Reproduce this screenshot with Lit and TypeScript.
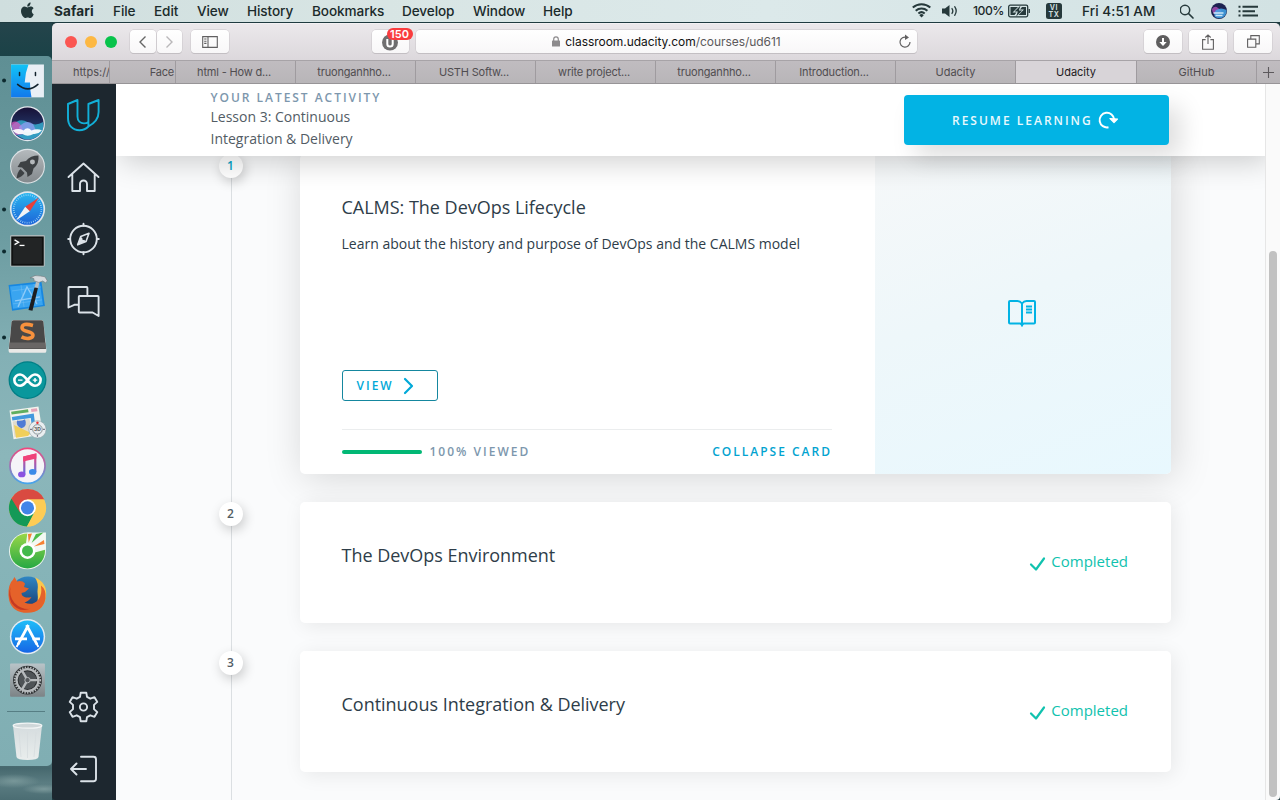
import { LitElement, html, css, svg } from "lit";
import { customElement } from "lit/decorators.js";
import { styleMap } from "lit/directives/style-map.js";

const menus = [
  { label: "Safari", width: 59 },
  { label: "File", width: 41 },
  { label: "Edit", width: 43 },
  { label: "View", width: 50 },
  { label: "History", width: 65 },
  { label: "Bookmarks", width: 90 },
  { label: "Develop", width: 71 },
  { label: "Window", width: 70 },
  { label: "Help", width: 60 },
];

@customElement("menu-bar")
class MenuBar extends LitElement {
  static styles = css`
    :host {
      display: flex;
      height: 22px;
      flex: none;
      box-sizing: content-box;
      border-bottom: 1px solid #1f3b40;
      background: linear-gradient(90deg, #cfdede 0%, #d8e5e4 30%, #dce9ea 60%, #d2e2e3 100%);
      color: #1b2a2b;
      font: 500 13.6px/22px Inter, Roboto, sans-serif;
      white-space: nowrap;
    }
    svg { display: block; flex: none; }
    .apple { width: 54px; }
    .item { flex: none; letter-spacing: -0.1px; }
    .item:nth-child(2) { font-weight: 700; letter-spacing: 0.1px; }
    .right { display: flex; margin-left: auto; width: 368px; flex: none; }
    .pct { width: 35px; font-size: 12.2px; letter-spacing: -0.5px; }
    .clock { width: 98px; letter-spacing: 0.05px; }
    .ime { width: 16px; height: 16px; margin: 3px 20px 0 16px; border-radius: 2.5px; background: #26393b; color: #cfdedf;
      font: 700 7px/7px Inter, sans-serif; text-align: center; letter-spacing: 0.6px; }
    .ime span { display: block; height: 7px; padding-top: 0.6px; }
  `;
  render() {
    return html`
      <svg class="apple" height="22" viewBox="0 0 54 22">
        <path fill="#23383a" d="M30.6 2.6c.1 1.1-.3 2.1-.9 2.8-.7.8-1.600 1.300-2.500 1.200-.1-1.100.4-2.100 1-2.800.6-.7 1.600-1.200 2.400-1.200zM33.700 14.200c-.7 2-2.200 3.900-3.500 3.900-1 0-1.400-.6-2.500-.6s-1.500.6-2.500.6c-1.800 0-4.200-3.900-4.200-7 0-2.900 1.800-4.500 3.600-4.500 1.200 0 2.200.8 2.900.8.7 0 1.800-.9 3.200-.8.5 0 2 .2 2.900 1.600-2.600 1.700-2.100 4.900.1 6z"/>
      </svg>
      ${menus.map((m) => html`<span class="item" style=${styleMap({ width: m.width + "px" })}>${m.label}</span>`)}
      <div class="right">
        <svg width="61" height="22" viewBox="0 0 61 22" fill="none" stroke="#26393b">
          <path stroke-width="2" d="M.8 7.600a13.200 13.200 0 0 1 17.500 0M3.700 10.700a8.900 8.900 0 0 1 11.700 0M6.400 13.500a4.800 4.800 0 0 1 6.300 0"/>
          <path fill="#26393b" stroke="none" d="M9.550 17.500l-2.200-2.300a3 3 0 0 1 4.400 0z"/>
          <path fill="#26393b" stroke="none" d="M30 8.500h3L37.500 5v12L33 13.500h-3z"/>
          <path stroke-width="1.300" stroke-linecap="round" d="M40 8.500q1.700 2.500 0 5M42.700 6.700q3 4.300 0 8.600"/>
        </svg>
        <span class="pct">100%</span>
        <svg width="22" height="22" viewBox="0 0 22 22">
          <rect x=".7" y="5.200" width="19" height="11.600" rx="1.500" fill="none" stroke="#26393b" stroke-width="1.300"/>
          <path fill="#26393b" d="M2.500 7h7.500l-5.500 5.500h4L6.500 15h-4zM18 15h-7.500l5.500-5.500h-4L14 7h4zM20.600 9h1.300v4h-1.300z"/>
          <path fill="#26393b" d="M12.500 5.500l-6 6h3.300l-1.600 5 6-6h-3.300z"/>
        </svg>
        <div class="ime"><span>VI</span><span>TX</span></div>
        <span class="clock">Fri 4:51 AM</span>
        <svg width="90" height="22" viewBox="0 0 90 22">
          <circle cx="5" cy="10" r="4.700" fill="none" stroke="#26393b" stroke-width="1.500"/>
          <path d="M8.500 13.500l4.500 4.500" stroke="#26393b" stroke-width="1.700" stroke-linecap="round"/>
          <circle cx="39" cy="11" r="8" fill="#1d2150"/>
          <path d="M32 9q3-4 6-1l4 3-5 4q-5-1-5-6z" fill="#b04fb8" opacity=".8"/>
          <path d="M36 10q5-3 10.500 0 .5 4-3 7-4 2.500-8.500 0-2-3 1-7z" fill="#43a5e8" opacity=".85"/>
          <path d="M33.500 13h10M35.500 15.500h7" stroke="#e9f7ff" stroke-width="1.600" opacity=".85"/>
          <path d="M58.500 6.800h2M58.500 11.200h2M58.500 15.600h2M62.500 6.800H78M62.500 11.200H75M62.500 15.600H78" stroke="#26393b" stroke-width="2"/>
        </svg>
      </div>
    `;
  }
}

const dot = svg`<circle cx="4" cy="21.500" r="2" fill="#0d2a2f"/>`;

const dockIcons = [
  svg`${dot}<rect x="11" y="5.500" width="33" height="33" fill="#e9eff5"/>
    <path d="M11 5.500h17.500q-3.500 9-3.800 18h5.300q0 8 1.500 15H11z" fill="url(#finder)"/>
    <path d="M19.500 13.500v3M35.500 13.500v3" stroke="#12222c" stroke-width="1.500" stroke-linecap="round"/>
    <path d="M17.500 25.500q10.500 9 20.500 0" fill="none" stroke="#12222c" stroke-width="1.500" stroke-linecap="round"/>`,
  svg`<circle cx="27.500" cy="21.800" r="17.500" fill="#e4e8ee"/><circle cx="27.500" cy="21.800" r="16.200" fill="url(#siri)"/>
    <path d="M11.400 24q8-9 16-4t15.800 0q1.500 9-5 14-10 7-20 0-6-4-6.800-10z" fill="#38b9da" opacity=".75"/>
    <path d="M11.400 21q5-4 10 3l3 8-8 1q-4.500-4-5-12z" fill="#d957bd" opacity=".75"/>
    <path d="M19 25q7-8 14-3l4 8H20z" fill="#9a9cf5" opacity=".7"/>
    <path d="M12.500 28.500q6-3 11 0 4-4.500 8 0 6-2.500 10.500 0-4 4-8.500 3.500-6 3.500-11 0-6 1-10-3.500z" fill="#fff" opacity=".92"/>`,
  svg`<circle cx="27.500" cy="21.300" r="17.500" fill="#dde3e6"/><circle cx="27.500" cy="21.300" r="16.400" fill="url(#launch)"/>
    <path d="M38.500 10.500q-8 0-12.500 5.500l-5.500 1-3 5 4.500.5 5 5 .5 4.500 4.500-3 1.500-5.500q6-4.500 5-13z" fill="#3d4144"/>
    <circle cx="32.500" cy="17" r="2.500" fill="#b4b8bb"/><path d="M20.500 24l4 4q-2 4-8 5.500 1-7 4-9.500z" fill="#3d4144"/>`,
  svg`${dot}<circle cx="27.500" cy="21" r="17.700" fill="#e2e8ec"/><circle cx="27.500" cy="21" r="16" fill="url(#safari)"/>
    <circle cx="27.500" cy="21" r="13.900" fill="none" stroke="#a9dcfa" stroke-width="1.800" stroke-dasharray=".7 1.480"/>
    <path d="M39 9.500L29.800 23.300 25.200 18.700z" fill="#e8403a"/><path d="M16 32.500l9.200-13.800 4.600 4.600z" fill="#f1f4f6"/>`,
  svg`${dot}<rect x="10" y="5" width="35" height="32" rx="1.500" fill="#a9b6b8"/><rect x="11.200" y="6.500" width="32.600" height="29.300" fill="#111"/><rect x="13" y="8" width="29" height="26" fill="#222425"/>
    <path d="M14.500 10l4 2.300-4 2.300" fill="none" stroke="#fff" stroke-width="1.400"/><path d="M19.500 15.500h5" stroke="#fff" stroke-width="1.300"/>`,
  svg`<path d="M8.500 12l33-3.500 3.500 24.500-33 5z" fill="#1787e0"/><path d="M10 13.500l30-3 3 21.500-30 4z" fill="#3aa5f0"/>
    <path d="M18 34l9-20 10 17M15 28l25-4" fill="none" stroke="#8fcbf8" stroke-width="1.400"/><path d="M12 18l29-4M13 31l29-4M21 12l3 22M34 11l3 20" stroke="#75c1f5" stroke-width=".5"/>
    <path d="M40 7l-2 9-3.500-.5 2-9z" fill="#b9c0c4"/><path d="M38 15l-5.500 23-4-.8L34.500 14.500z" fill="#1c1e20"/><path d="M30 5q5-3.800 10.500-2l4.500.8 2.500 4.200-2 1.800-2.700-1.800-3.800 1.500-5-1.800v-2q-2-1.500-4-.7z" fill="#d5dade" stroke="#737a7e" stroke-width=".6"/>`,
  svg`${dot}<path d="M11.500 6q.3-2 2-2h28q1.700 0 2 2l3 28q0 3-2 3h-34q-2 0-2-3z" fill="#e9e9e7"/><path d="M11.500 6q.3-1.800 2-1.800h28q1.700 0 2 1.800l2.500 27H9z" fill="#494848"/><path d="M9.600 26.500h35.800l.6 6H9z" fill="#696665"/>
    <path d="M33 9.500q-11-3-11 2.500c0 4 11 3 11 7s-7 4.500-11.500 2" fill="none" stroke="#f7913d" stroke-width="3.600"/>`,
  svg`<circle cx="27.500" cy="21.200" r="19" fill="#007f86"/><circle cx="27.500" cy="21.200" r="17.700" fill="#0a979c"/>
    <path d="M27.500 21.200c-3-4-5-5.700-7.500-5.700a5.700 5.700 0 0 0 0 11.400c2.500 0 4.500-1.700 7.500-5.700s5-5.700 7.500-5.700a5.700 5.700 0 0 1 0 11.400c-2.500 0-4.500-1.700-7.500-5.700z" fill="none" stroke="#fff" stroke-width="2.600"/>
    <path d="M18 21.200h4.500M32.800 21.200h4.500M35.050 19v4.400" stroke="#fff" stroke-width="1.500"/>`,
  svg`<path d="M9.500 8.500l29-4 4.500 28-29.500 5z" fill="#f4f3ee"/><path d="M11 9.700l17-2.300.6 2.800-17 2.300z" fill="#5fae5f"/><path d="M11.800 15l22-3.500 2 16-3.500.5-1.500-12-18.500 2.600z" fill="#4399dd"/><path d="M12.500 19.500l17-2.600 2.500 13.500-17.500 5z" fill="#e0dccf"/><path d="M14 23l17 8-3 3-12 2z" fill="#f0cf5a"/>
    <path d="M17 18.500q4 1 8-1.200 3 7-3.500 9-6-2-4.500-7.800z" fill="#4f7bd5"/><path d="M31 7l6-.8.5 3-6 .9z" fill="#e6a3b8"/>
    <circle cx="37.500" cy="27.500" r="8.700" fill="#e9eef0" stroke="#8aa0a6" stroke-width=".6"/><circle cx="37.500" cy="27.500" r="4.800" fill="none" stroke="#7d888c" stroke-width=".9"/><path d="M37.500 20v2M37.500 33v2M30 27.500h2M43 27.500h2" stroke="#778" stroke-width="1.200"/><circle cx="37.500" cy="20.800" r="1.200" fill="#e33"/><text x="37.500" y="29.500" font-size="5" font-weight="700" font-family="Inter, sans-serif" text-anchor="middle" fill="#555">3D</text>`,
  svg`<circle cx="27.500" cy="21" r="18.500" fill="url(#itunes)"/><circle cx="27.500" cy="21" r="16.700" fill="#f5f4f8"/>
    <path d="M24.300 29.500V12.500l11-2.700V27" fill="none" stroke="url(#note)" stroke-width="2.200"/><path d="M23.200 11.500l13.200-3v5L23.200 16.500z" fill="#f0427a"/>
    <ellipse cx="21.700" cy="29.500" rx="3.700" ry="2.900" fill="#8b53e0"/><ellipse cx="32.700" cy="27" rx="3.700" ry="2.900" fill="#3b8be8"/>`,
  svg`<circle cx="27.500" cy="21" r="18.700" fill="#fdd05c"/><path d="M27.500 21L11.300 11.650A18.700 18.700 0 0 0 27 39.700l7.500-14.500z" fill="#149957"/>
    <path d="M27.500 12.500h16.900A18.700 18.700 0 0 0 11.300 11.650l8.500 13.700z" fill="#d94a41"/><path d="M43.700 12.500H27.500v8.500l8 4-8.500 14.700A18.700 18.700 0 0 0 43.700 12.500z" fill="#fdcc55"/>
    <circle cx="27.500" cy="21" r="8.400" fill="#fff"/><circle cx="27.500" cy="21" r="6.600" fill="#4285e8"/>`,
  svg`<circle cx="27.500" cy="21" r="18.500" fill="#f2f8f2"/><circle cx="27.500" cy="21" r="17.600" fill="url(#coc)"/>
    <path d="M26 13L27.500 2.500H46v17l-11 3z" fill="#f2f8f2"/><circle cx="27.500" cy="21" r="8" fill="#fff"/><path d="M28.700 12.500L28 4l4-.5z" fill="#f58133"/><path d="M31.500 13L36 4l7.500-1.500z" fill="#4dbc4a"/><path d="M34 16.500l10-6.500.5 4z" fill="#f58133"/><circle cx="27.500" cy="21" r="5.500" fill="#43b94b"/>`,
  svg`<circle cx="28" cy="20.500" r="17" fill="url(#fox)"/>
    <path d="M35 4.500q12 5 11.200 17.500-1 13-11.200 16.500 4-9 2.500-20Q39 10 35 4.500z" fill="#fbc64b"/>
    <path d="M11 9q2-2 3.500-5l2.500 4.500q5-1.500 8 2l-1 3.500 5 1.500-4 3.500-3.500 1q0 3 3 4 3 1 7 0-2 4-7 5.500 8 4 14-3 4-5 2.500-14 5.500 4 4.500 13-2 13.500-18 14.500Q12 39.500 9 27 7 16 11 9z" fill="#e5622a"/>
    <path d="M10.500 14q-2 9 4 16 7 7 16 6-12 4-19-6-4-8-1-16z" fill="#c53a22"/>`,
  svg`<circle cx="27.500" cy="20.700" r="17.700" fill="#e4ecf2"/><circle cx="27.500" cy="20.700" r="16.200" fill="url(#store)"/>
    <path d="M28.500 9L18 28.500M26.500 9l10.500 19.500" stroke="#fff" stroke-width="2.800"/><path d="M15 23h12M32.500 23h7.500" stroke="#fff" stroke-width="2.600"/><path d="M18.500 27.500L16.500 31M36.500 27.500l2 3.500" stroke="#fff" stroke-width="2"/>`,
  svg`<rect x="10" y="4.500" width="35" height="33.500" rx="1" fill="url(#prefs)"/><circle cx="27.500" cy="21.200" r="14.500" fill="#282b2d"/>
    <circle cx="27.500" cy="21.200" r="11" fill="none" stroke="#b6babc" stroke-width="2.200"/><circle cx="27.500" cy="21.200" r="12.800" fill="none" stroke="#b6babc" stroke-width="1.900" stroke-dasharray="1.360 1.360"/><circle cx="27.500" cy="21.200" r="9" fill="#4e5356"/>
    <path d="M27.500 21.200h11M27.500 21.200l-5.500-9.500M27.500 21.200L22 30.700" stroke="#b6babc" stroke-width="2.400"/><circle cx="27.500" cy="21.200" r="2.700" fill="#55595c" stroke="#b6babc"/>`,
];

@customElement("app-dock")
class AppDock extends LitElement {
  static styles = css`
    :host {
      display: flex;
      flex-direction: column;
      flex: none;
      width: 52px;
      box-sizing: border-box;
      padding-top: 33px;
      background:
        radial-gradient(ellipse 26px 7px at 14px 758px, #789799 0, transparent 100%),
        radial-gradient(ellipse 22px 5px at 44px 766px, #7b999b 0, transparent 100%),
        linear-gradient(180deg, #24444b 0, #1b4247 33px, #315a5e 60px, #5c8588 730px, #46686e 745px, #5b7d82 760px, #4b6d73 777px);
    }
    .panel {
      display: flex;
      flex-direction: column;
      height: 707px;
      padding-top: 3px;
      border-radius: 0 5px 5px 0;
      background: linear-gradient(180deg, #5f8f94 0, #6c9ca1 180px, #83b0b5 300px, #8bb6ba 400px, #84b3b7 560px, #80aeb3 707px);
    }
    svg { display: block; flex: none; width: 52px; height: 42.85px; }
    .rule { height: 1px; margin: 9px 7px 0; background: #567e84; flex: none; }
    .trash { height: 54px; }
  `;
  render() {
    const grad = (id: string, a: string, b: string) =>
      svg`<linearGradient id=${id} x1="0" y1="0" x2="0" y2="1"><stop offset="0" stop-color=${a}/><stop offset="1" stop-color=${b}/></linearGradient>`;
    const ids: Record<number, [string, string, string][]> = {
      0: [["finder", "#12c3f6", "#1279ec"]],
      1: [["siri", "#171136", "#294c85"]],
      2: [["launch", "#b4b9bc", "#83898d"]],
      3: [["safari", "#2ab6ef", "#1c64d8"]],
      9: [["itunes", "#f4457b", "#42a8ee"], ["note", "#f0427a", "#5574e8"]],
      11: [["coc", "#9ad748", "#26a844"]],
      12: [["fox", "#2f86c4", "#173a6e"]],
      13: [["store", "#20bdf8", "#1566e6"]],
      14: [["prefs", "#b9c4c8", "#7c8386"]],
    };
    return html`<div class="panel">
      ${dockIcons.map((icon, i) => html`<svg viewBox="0 0 52 43"><defs>${(ids[i] ?? []).map((g) => grad(...g))}</defs>${icon}</svg>`)}
      <div class="rule"></div>
      <svg class="trash" viewBox="0 0 52 54">
        <defs>${grad("bin", "#d5dcde", "#e9eded")}</defs>
        <path d="M13 13.500l3.500 31.500q.5 3 11 3t11-3l3.500-31.500z" fill="url(#bin)"/>
        <ellipse cx="27.500" cy="13.700" rx="14.300" ry="2.500" fill="#cfd7d9" stroke="#f4f6f6" stroke-width="1.200"/>
        <path d="M19 20l2 25M27.500 20v26M36 20l-2 25" stroke="#d5dcde" stroke-width=".8"/>
      </svg>
    </div>`;
  }
}

const tabs = [
  { label: "html - How d...", width: 120, cut: true },
  { label: "truonganhho...", width: 120, cut: true },
  { label: "USTH Softw...", width: 120, cut: true },
  { label: "write project...", width: 120, cut: true },
  { label: "truonganhho...", width: 120, cut: true },
  { label: "Introduction...", width: 120, cut: true },
  { label: "Udacity", width: 120 },
  { label: "Udacity", width: 121, active: true },
  { label: "GitHub", width: 120 },
];

@customElement("browser-chrome")
class BrowserChrome extends LitElement {
  static styles = css`
    :host { display: block; flex: none; font-family: Inter, Roboto, sans-serif; }
    svg { display: block; }
    .toolbar {
      display: flex; align-items: center; height: 37px; box-sizing: border-box; padding: 0 7px 1px 13px;
      background: linear-gradient(180deg, #ebe8eb, #dcd8dc); border-radius: 5px 5px 0 0; border-top: 1px solid #f3f1f3;
    }
    .light { width: 12px; height: 12px; border-radius: 50%; margin-right: 8px; flex: none; }
    .red { background: #fb5652; } .amber { background: #fdb843; } .green { background: #08c34b; }
    .btn {
      display: flex; align-items: center; justify-content: center; height: 23px; width: 38px; flex: none;
      background: linear-gradient(180deg, #fff, #f8f7f8); border-radius: 4px; box-shadow: 0 0 0 .5px #c9c5c9, 0 1px 0 #bdb9bd;
    }
    .back { width: 26px; margin: 0 1px 0 4.500px; }
    .fwd { width: 25px; margin-right: 9px; }
    .blocker { position: relative; margin-left: 143px; margin-right: 7.500px; width: 37px; }
    .badge {
      position: absolute; left: 15px; top: -2px; width: 26px; height: 12px; border-radius: 6px; background: #f93c3e;
      color: #fff; font: 600 11px/12px Inter, sans-serif; text-align: center;
    }
    .address { position: relative; width: 501px; margin-right: 227px; font-size: 12px; color: #5b595b; gap: 5px; }
    .address b { font-weight: 400; color: #111; }
    .url { letter-spacing: -.04px; }
    .reload { position: absolute; right: 5px; top: 4px; }
    .gap { margin-right: 7px; }
    .tabs {
      display: flex; height: 24px; box-sizing: border-box; border-top: 1px solid #a7a3a7; border-bottom: 1px solid #979497;
      background: linear-gradient(180deg, #c0bcc0, #b8b5b8); color: #504d50; font-size: 11px; line-height: 23px; white-space: nowrap;
    }
    .tab { flex: none; box-sizing: border-box; border-right: 1px solid #9f9b9f; text-align: center; overflow: hidden; }
    .cut { padding-right: 3px; letter-spacing: -.18px; }
    .first { width: 58px; padding-left: 21px; text-align: left; }
    .second { width: 66px; text-align: right; padding-right: 1px; letter-spacing: -.2px; }
    .active { background: #d8d4d8; color: #1c1a1c; }
    .plus { display: flex; align-items: center; justify-content: center; flex: 1; }
  `;
  render() {
    return html`
      <div class="toolbar">
        <span class="light red"></span><span class="light amber"></span><span class="light green"></span>
        <span class="btn back"><svg width="10" height="14" fill="none" stroke="#666" stroke-width="1.400"><path d="M7.500 1.500L2 7l5.500 5.500"/></svg></span>
        <span class="btn fwd"><svg width="10" height="14" fill="none" stroke="#b9b7b9" stroke-width="1.400"><path d="M2.500 1.500L8 7l-5.500 5.500"/></svg></span>
        <span class="btn"><svg width="16" height="12" fill="none" stroke="#616061"><path d="M.7.6h14.600v10.800H.7zM6 .6v10.800M2.200 3h2.300M2.200 5.200h2.300M2.200 7.400h2.300" stroke-width="1.100"/></svg></span>
        <span class="btn blocker">
          <svg width="16" height="18" viewBox="0 0 16 18"><circle cx="8" cy="9.500" r="8" fill="#6f6e6f"/><path d="M5.300 6v5q0 2.500 2.700 2.500t2.700-2.500V6" fill="none" stroke="#fff" stroke-width="2"/></svg>
          <span class="badge">150</span>
        </span>
        <span class="btn address">
          <svg width="8" height="11" viewBox="0 0 8 11"><rect y="4.500" width="8" height="6" rx=".6" fill="#8d8b8d"/><path d="M1.700 5V3.200a2.300 2.300 0 0 1 4.600 0V5" fill="none" stroke="#8d8b8d" stroke-width="1.200"/></svg>
          <span class="url"><b>classroom.udacity.com</b>/courses/ud611</span>
          <svg class="reload" width="14" height="15" viewBox="0 0 14 15"><path d="M8.500 3.300A5 5 0 1 0 12 8" fill="none" stroke="#616061" stroke-width="1.200"/><path d="M7 .5l4 3-4 2.600z" fill="#616061"/></svg>
        </span>
        <span class="btn gap"><svg width="14" height="14"><circle cx="7" cy="7" r="7" fill="#5f5e5f"/><path d="M7 3v5" stroke="#fff" stroke-width="2"/><path d="M7 11L3.300 7h7.400z" fill="#fff"/></svg></span>
        <span class="btn gap"><svg width="12" height="16" fill="none" stroke="#616061" stroke-width="1.100"><path d="M3.600 5.600H.6v9.600h10.800V5.600H8.400M6 10V1M3.300 3.500L6 .9l2.700 2.600"/></svg></span>
        <span class="btn"><svg width="13" height="13" fill="none" stroke="#616061" stroke-width="1.100"><path d="M.6 4.100h8.200v8.200H.6zM3.800 4V.6h8.500v8.300H9"/></svg></span>
      </div>
      <div class="tabs">
        <span class="tab first">https://</span>
        <span class="tab second">Face</span>
        ${tabs.map((t) => html`<span class="tab ${t.active ? "active" : ""} ${t.cut ? "cut" : ""}" style=${styleMap({ width: t.width + "px" })}>${t.label}</span>`)}
        <span class="plus"><svg width="11" height="11"><path d="M5.500 0v11M0 5.500h11" stroke="#5c595c" stroke-width="1.100"/></svg></span>
      </div>
    `;
  }
}

@customElement("class-nav")
class ClassNav extends LitElement {
  static styles = css`
    :host { display: flex; flex-direction: column; width: 64px; flex: none; background: #1d272f; border-radius: 0 0 0 4px; }
    svg { display: block; flex: none; width: 64px; height: 62px; fill: none; stroke: #dbe2e8; stroke-width: 1.900; stroke-linejoin: round; stroke-linecap: round; }
    .logo { stroke: #12b0d8; stroke-width: 1.900; }
    .bottom { margin-top: auto; }
  `;
  render() {
    return html`
      <svg class="logo" viewBox="0 0 64 62"><path d="M25.500 16L16 20V34C16 41.500 20.500 46.300 27.500 46.300C31.500 46.300 34.300 44.800 36.400 42.500C41 40 46.600 35.500 46.600 28V16L36.400 20V42.500M25.500 16V32.500C25.500 37 28.500 39.400 32 39.400Q34.500 39.400 36.400 38"/></svg>
      <svg viewBox="0 0 64 62"><path d="M16.500 31L31.500 17.500 46.500 31M20.300 28v17h7.700V38a3.500 3.500 0 0 1 7 0v7h7.700V28"/></svg>
      <svg viewBox="0 0 64 62"><circle cx="31.500" cy="31" r="13.300"/><path d="M31.500 15.700v2M31.500 44.300v2M16.200 31h2M44.800 31h2"/><path d="M37 25.300l-3 8.200-8.300 3.300 3-8.300z" stroke-width="1.600"/><path d="M28.500 28.500l5.500 5-8.300 3.300z" fill="#dbe2e8" stroke="none"/><circle cx="31.300" cy="31" r="1" stroke="none" fill="#1d272f"/></svg>
      <svg viewBox="0 0 64 62"><path d="M26.500 34.800h-4.200L16.500 37.500V17.700q0-.7.700-.7h17.500q.7 0 .7.700V24.500M27.500 26h18.300q.8 0 .8.800v19.200l-6-3.500h-13q-.8 0-.8-.8V26.800q0-.8.700-.8z"/></svg>
      <svg class="bottom" viewBox="0 0 64 62"><path d="M28.700 16.700h5.600l.7 4.200 3.300 1.800 4.200-1.500 2.800 4.700-3.300 3v4.200l3.300 3-2.800 4.700-4.200-1.500-3.300 1.800-.7 4.200h-5.600l-.7-4.200-3.300-1.800-4.200 1.500-2.800-4.700 3.300-3v-4.200l-3.300-3 2.800-4.700 4.200 1.500 3.300-1.800z"/><circle cx="31.500" cy="31" r="3.600"/></svg>
      <svg viewBox="0 0 64 62"><path d="M29 18.700h12.500q2.500 0 2.500 2.500v19.600q0 2.500-2.500 2.500H29M34 31H19M24.500 25.500L19 31l5.500 5.500"/></svg>
    `;
  }
}

@customElement("lesson-card")
class LessonCard extends LitElement {
  static properties = { number: { type: Number }, heading: {}, text: {} };
  declare number: number;
  declare heading: string;
  declare text?: string;
  static styles = css`
    :host { display: flex; color: #2e3d49; font-family: "Open Sans", sans-serif; }
    svg { display: block; flex: none; }
    .step {
      width: 24px; height: 24px; border-radius: 50%; background: #fff; flex: none; margin: 0 57px 0 103px;
      font-size: 12px; font-weight: 600; line-height: 23.500px; text-align: center; color: #525c65; box-shadow: 2px 4px 12px rgba(0, 0, 0, .2);
      text-indent: -1px;
    }
    .step.current { color: #02a3c7; }
    .card { display: flex; width: 871px; height: 121px; box-sizing: border-box; background: #fff; border-radius: 5px; box-shadow: 3px 3px 20px rgba(0, 0, 0, .08); }
    .card.tall { height: 320px; box-shadow: 3px 4px 38px rgba(0, 0, 0, .15); }
    h2 { margin: 0; font-size: 18px; font-weight: 400; line-height: 26px; letter-spacing: -.02px; white-space: nowrap; }
    .short { justify-content: space-between; padding: 40px 43px 0 41.500px; }
    .done { display: flex; height: 20px; margin-top: 9px; font-size: 15px; line-height: 20px; color: #10c2ae; gap: 5px; }
    .done svg { margin-top: 4px; }
    .main { display: flex; flex-direction: column; width: 575px; box-sizing: border-box; padding: 40px 43px 0 41.500px; }
    p { margin: 12px 0 0; font-size: 14px; line-height: 24px; white-space: nowrap; }
    .view {
      display: flex; align-items: center; width: 96px; height: 31px; box-sizing: border-box; margin-top: 114px; padding-left: 14px;
      border: 1px solid #15879f; border-radius: 3px; color: #02a9d8; font-size: 12px; font-weight: 600; letter-spacing: 2px; gap: 9px;
    }
    .foot { display: flex; align-items: center; margin-top: 28px; border-top: 1px solid #ebedee; height: 44px; font-size: 12px; letter-spacing: 2px; color: #7d97ad; font-weight: 600; }
    .foot span { padding-bottom: 2px; }
    .foot .bar { width: 80px; height: 4px; padding: 0; border-radius: 2px; background: #02b875; margin-right: 8px; }
    .foot .collapse { margin-left: auto; color: #02a3d0; letter-spacing: 2px; }
    .art { flex: 1; border-radius: 0 5px 5px 0; background: linear-gradient(160deg, #f6f8f9 0%, #eef7fa 45%, #e8f8fe 100%); padding: 145px 0 0 132px; }
  `;
  render() {
    if (!this.text) {
      return html`<div class="step">${this.number}</div>
        <div class="card short">
          <h2>${this.heading}</h2>
          <div class="done"><svg width="17" height="17" fill="none" stroke="#10c2ae" stroke-width="2.200" stroke-linecap="round" stroke-linejoin="round"><path d="M2 9.500L7 14.500 15 3.500"/></svg>Completed</div>
        </div>`;
    }
    return html`<div class="step current">${this.number}</div>
      <div class="card tall">
        <div class="main">
          <h2>${this.heading}</h2>
          <p>${this.text}</p>
          <div class="view">VIEW<svg width="11" height="18" fill="none" stroke="#02a9d8" stroke-width="2.200" stroke-linecap="round" stroke-linejoin="round"><path d="M2 2l7 7-7 7"/></svg></div>
          <div class="foot"><span class="bar"></span><span>100% VIEWED</span><span class="collapse">COLLAPSE CARD</span></div>
        </div>
        <div class="art">
          <svg width="30" height="29" viewBox="0 0 30 29" fill="none" stroke="#02b3e4" stroke-width="2" stroke-linejoin="round"><path d="M15 4.500Q13 2 10.500 2H3q-1 0-1 1v20.500q0 1 1 1h10.500L15 26l1.500-1.500H27q1 0 1-1V3q0-1-1-1h-7.500Q17 2 15 4.500zM15 4.500V27.500"/><path d="M19 7.500h6M19 10.500h6M19 13.500h6"/></svg>
        </div>
      </div>`;
  }
}

@customElement("course-page")
class CoursePage extends LitElement {
  static styles = css`
    :host { display: flex; flex-direction: column; flex: 1; min-width: 0; background: #fafbfc; font-family: "Open Sans", sans-serif; }
    header {
      display: flex; justify-content: space-between; height: 72px; flex: none; box-sizing: border-box; padding: 3px 96px 0 94.500px;
      background: #fff; position: relative; z-index: 1; box-shadow: 5px 5px 30px rgba(0, 0, 0, .2); clip-path: inset(0 0 -60px 0);
    }
    .eyebrow { padding-top: 1px; font-size: 12px; line-height: 20px; letter-spacing: 1.960px; color: #7d97ad; font-weight: 600; white-space: nowrap; }
    .lesson { margin-top: -2px; font-size: 14px; line-height: 22px; color: #525c65; width: 170px; }
    .resume {
      display: flex; align-items: center; width: 265px; height: 50px; margin-top: 8px; box-sizing: border-box; padding-left: 48px; gap: 5px;
      border-radius: 4px; background: #02b3e4; color: #e9f9fd; font-size: 12px; font-weight: 600; letter-spacing: 2px; white-space: nowrap;
      box-shadow: 12px 12px 24px rgba(0, 0, 0, .13);
    }
    .scroll { flex: 1; min-height: 0; overflow: hidden; }
    .list {
      display: flex; flex-direction: column; gap: 28px; margin-top: -2px; height: 646px;
      background: linear-gradient(#dbdfe2, #dbdfe2) 115px 0 / 1px 100% no-repeat;
    }
  `;
  render() {
    return html`
      <header>
        <div>
          <div class="eyebrow">YOUR LATEST ACTIVITY</div>
          <div class="lesson">Lesson 3: Continuous Integration &amp; Delivery</div>
        </div>
        <div class="resume">RESUME LEARNING
          <svg width="20" height="18" viewBox="0 0 20 18" fill="none" stroke="#fff" stroke-width="2"><path d="M10.500 16.200A7.300 7.300 0 1 1 16.200 8.500"/><path d="M12 7.500l7.500.5-3.500 3.500z" fill="#fff" stroke-width="1.200" stroke-linejoin="round"/></svg>
        </div>
      </header>
      <div class="scroll">
        <div class="list">
          <lesson-card .number=${1} .heading=${"CALMS: The DevOps Lifecycle"} .text=${"Learn about the history and purpose of DevOps and the CALMS model"}></lesson-card>
          <lesson-card .number=${2} .heading=${"The DevOps Environment"}></lesson-card>
          <lesson-card .number=${3} .heading=${"Continuous Integration & Delivery"}></lesson-card>
        </div>
      </div>
    `;
  }
}

@customElement("app-root")
class AppRoot extends LitElement {
  static styles = css`
    :host { display: flex; flex-direction: column; width: 1280px; height: 800px; overflow: hidden; background: #1f3b40; }
    .desk { display: flex; flex: 1; min-height: 0; }
    .window { display: flex; flex-direction: column; flex: 1; min-width: 0; }
    .view { display: flex; flex: 1; min-height: 0; }
    .track { width: 15px; box-sizing: border-box; flex: none; border-left: 1px solid #e6e6e6; background: #fafafa; border-radius: 0 0 4px 0; padding: 167px 3px 3px; position: relative; z-index: 2; }
    .thumb { height: 100%; border-radius: 4px; background: #c1c1c1; }
  `;
  render() {
    return html`
      <menu-bar></menu-bar>
      <div class="desk">
        <app-dock></app-dock>
        <div class="window">
          <browser-chrome></browser-chrome>
          <div class="view">
            <class-nav></class-nav>
            <course-page></course-page>
            <div class="track"><div class="thumb"></div></div>
          </div>
        </div>
      </div>
    `;
  }
}
